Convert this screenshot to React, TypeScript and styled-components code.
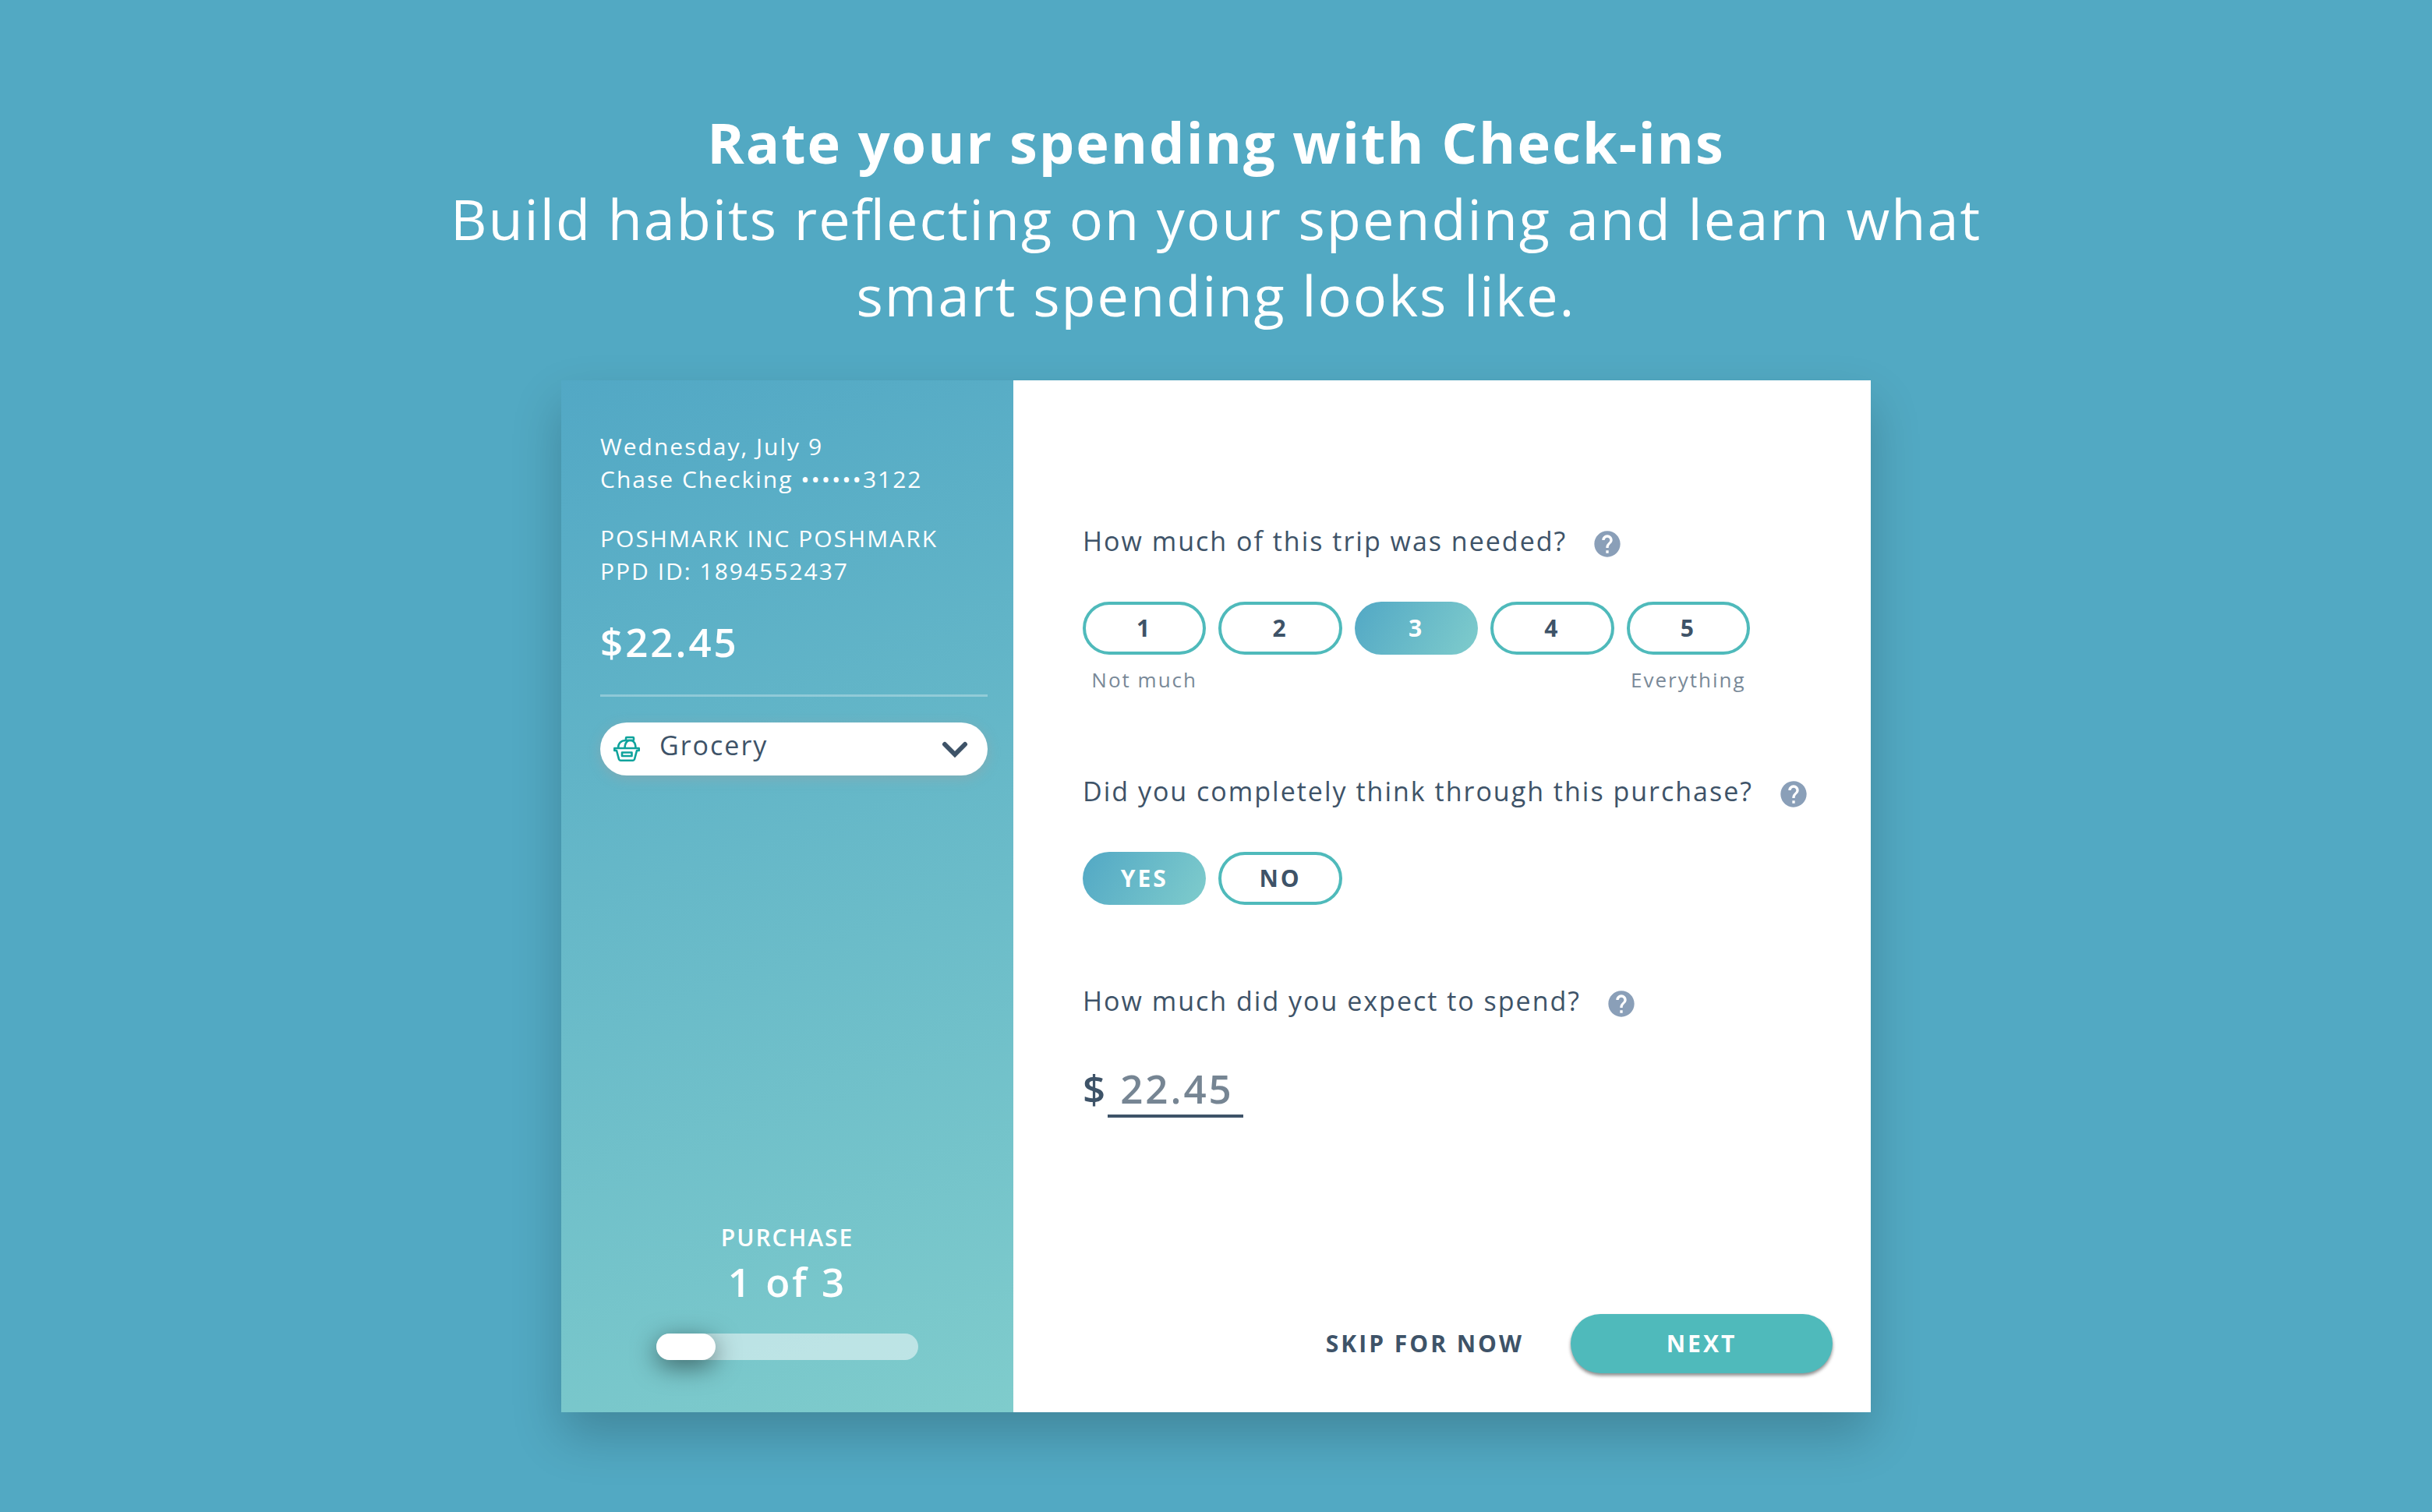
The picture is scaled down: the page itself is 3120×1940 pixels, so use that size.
import React, { useId, useState } from "react";
import styled, { createGlobalStyle, css } from "styled-components";
import { MdHelp } from "react-icons/md";

const ink = "#3e5368";
const teal = "#4fbabb";
const blue = "#52a9c3";
const sky = "#52a8c5";
const mint = "#7fcccc";

const GlobalStyle = createGlobalStyle`
  *, *::before, *::after { box-sizing: border-box; }
  body {
    margin: 0;
    background: ${blue};
    color: ${ink};
    font-family: "Open Sans", "Noto Sans", sans-serif;
    letter-spacing: 2px;
  }
  button, input, select { font: inherit; color: inherit; letter-spacing: inherit; }
`;

const Page = styled.main`
  min-height: 100vh;
  padding: 133px 40px 128px;
  display: flex;
  flex-direction: column;
  align-items: center;
  gap: 61px;
`;

const Intro = styled.header`
  max-width: 2100px;
  color: #fff;
  text-align: center;
  font-size: 72px;
  line-height: 98px;
  font-feature-settings: "liga" 1;
`;

const Title = styled.h1`
  margin: 0;
  font-size: inherit;
  font-weight: 700;
`;

const Lead = styled.p`
  margin: 0;
`;

const Card = styled.section`
  width: 100%;
  max-width: 1680px;
  min-height: 1324px;
  display: grid;
  grid-template-columns: 580px 1fr;
  background: #fff;
  box-shadow: 0 30px 60px rgba(0, 0, 0, 0.2);
`;

const Sidebar = styled.aside`
  display: flex;
  flex-direction: column;
  justify-content: space-between;
  padding: 64px 0 67px;
  color: #fff;
  font-size: 30px;
  line-height: 42px;
  background: linear-gradient(160deg, ${sky}, ${mint});
`;

const Details = styled.div`
  display: flex;
  flex-direction: column;
  padding: 0 33px 0 50px;
`;

const Paragraph = styled.p`
  margin: 0 0 34px;
`;

const largeFigure = css`
  font-size: 51px;
  font-weight: 600;
  letter-spacing: 3px;
`;

const Amount = styled.strong`
  ${largeFigure}
  padding-bottom: 33px;
  border-bottom: 3px solid rgba(255, 255, 255, 0.3);
  line-height: 70px;
`;

const Picker = styled.div`
  position: relative;
  display: flex;
  align-items: center;
  height: 68px;
  margin-top: 33px;
  border-radius: 34px;
  background: #fff;
  color: ${ink};
  box-shadow: 0 4px 16px rgba(160, 160, 160, 0.45);
`;

const PickerIcon = styled.span`
  position: absolute;
  left: 17px;
  display: flex;
  pointer-events: none;
`;

const PickerArrow = styled(PickerIcon)`
  left: auto;
  right: 25px;
`;

const Select = styled.select`
  width: 100%;
  height: 100%;
  padding: 0 80px 10px 76px;
  border: 0;
  border-radius: 34px;
  background: transparent;
  appearance: none;
  font-size: 34px;
`;

const Progress = styled.div`
  align-self: center;
  width: 336px;
  display: flex;
  flex-direction: column;
  text-align: center;
  font-weight: 600;
`;

const Count = styled.span`
  ${largeFigure}
  margin-bottom: 32px;
  line-height: 70px;
`;

const Track = styled.div`
  height: 34px;
  border-radius: 17px;
  background: rgba(255, 255, 255, 0.5);
`;

const Fill = styled.div`
  width: 76px;
  height: 100%;
  border-radius: 17px;
  background: #fff;
  box-shadow: 0 8px 32px rgba(0, 0, 0, 0.5);
`;

const Survey = styled.form`
  display: flex;
  flex-direction: column;
  justify-content: space-between;
  padding: 182px 49px 50px 89px;
`;

const Questions = styled.div`
  display: flex;
  flex-direction: column;
  gap: 99px;
`;

const Group = styled.div`
  display: flex;
  flex-direction: column;
  align-items: flex-start;
`;

const Heading = styled.div`
  display: flex;
  align-items: center;
  gap: 32px;
  margin-bottom: 54px;
  font-size: 34px;
  line-height: 48px;
`;

const HelpButton = styled.button`
  display: flex;
  margin: 8px 0 0;
  padding: 0;
  border: 0;
  background: none;
  color: #8a9fb8;
`;

const Scale = styled.div`
  width: 100%;
  max-width: 856px;
  display: grid;
  grid-template-columns: repeat(5, 1fr);
  gap: 12px 16px;
`;

const buttonText = css`
  padding: 0 0 2px;
  font-size: 30px;
  font-weight: 700;
  letter-spacing: 3px;
`;

const pillFilled = css`
  border-color: transparent;
  background: linear-gradient(120deg, ${sky}, ${mint}) border-box;
  color: #fff;
`;

const Pill = styled.button<{ $selected: boolean }>`
  ${buttonText}
  height: 68px;
  border: 4px solid ${teal};
  border-radius: 34px;
  background: #fff;
  ${(p) => p.$selected && pillFilled}
`;

const Caption = styled.span<{ $column: number }>`
  grid-column: ${(p) => p.$column};
  color: #798998;
  font-size: 26px;
  line-height: 40px;
  text-align: center;
  white-space: nowrap;
`;

const Money = styled.div`
  ${largeFigure}
  display: flex;
  line-height: 68px;
`;

const MoneyInput = styled.input`
  width: 174px;
  height: 72px;
  padding: 0 16px;
  border: 0;
  border-bottom: 4px solid ${ink};
  background: transparent;
  color: #768593;
`;

const Actions = styled.div`
  display: flex;
  justify-content: flex-end;
  gap: 60px;
`;

const SkipButton = styled.button`
  ${buttonText}
  border: 0;
  background: none;
`;

const NextButton = styled.button`
  ${buttonText}
  width: 336px;
  height: 76px;
  border: 0;
  border-radius: 38px;
  background: ${teal};
  color: #fff;
  box-shadow: 0 3px 4px rgba(0, 0, 0, 0.45);
`;

const BasketIcon = () => (
  <svg width="34" height="34" viewBox="0 0 34 34" fill="none" stroke="#0fa39c" strokeWidth="2.6" strokeLinejoin="round">
    <path d="M1.300 16h31.400v3h-2.700l-3 11.200q-.5 1.500-2 1.500H9q-1.500 0-2-1.500L4 19H1.300z" />
    <path d="M11 21.500h12.500V26H11z" />
    <path d="M6 16c0-6 3.500-10 10-10" />
    <path d="M14.500 16c0-5 2-8.500 5-10h4c3.500 1.500 5 5 5 10" />
    <rect x="16" y="2" width="10" height="4" rx="1" />
  </svg>
);

const Chevron = () => (
  <svg width="34" height="22" viewBox="0 0 34 22" fill="none" stroke={ink} strokeWidth="6" strokeLinecap="round">
    <path d="M4 5l13 13 13-13" />
  </svg>
);

function Question({ id, text, htmlFor }: { id?: string; text: string; htmlFor?: string }) {
  return (
    <Heading>
      {htmlFor ? <label htmlFor={htmlFor}>{text}</label> : <span id={id}>{text}</span>}
      <HelpButton type="button" aria-label={`Help: ${text}`}>
        <MdHelp size={40} />
      </HelpButton>
    </Heading>
  );
}

export default function App() {
  const id = useId();
  const [needed, setNeeded] = useState(3);
  const [thought, setThought] = useState("YES");

  return (
    <>
      <GlobalStyle />
      <Page>
        <Intro>
          <Title>Rate your spending with Check-ins</Title>
          <Lead>Build habits reflecting on your spending and learn what smart spending looks like.</Lead>
        </Intro>
        <Card>
          <Sidebar>
            <Details>
              <Paragraph>
                Wednesday, July 9<br />
                Chase Checking ••••••3122
              </Paragraph>
              <Paragraph>
                POSHMARK INC POSHMARK<br />
                PPD ID: 1894552437
              </Paragraph>
              <Amount>$22.45</Amount>
              <Picker>
                <PickerIcon><BasketIcon /></PickerIcon>
                <Select aria-label="Category" defaultValue="Grocery">
                  <option>Grocery</option>
                </Select>
                <PickerArrow><Chevron /></PickerArrow>
              </Picker>
            </Details>
            <Progress>
              <span>PURCHASE</span>
              <Count>1 of 3</Count>
              <Track role="progressbar" aria-label="Purchase" aria-valuenow={1} aria-valuemax={3}>
                <Fill />
              </Track>
            </Progress>
          </Sidebar>
          <Survey onSubmit={(e) => e.preventDefault()}>
            <Questions>
              <Group role="group" aria-labelledby={`${id}-needed`}>
                <Question id={`${id}-needed`} text="How much of this trip was needed?" />
                <Scale>
                  {[1, 2, 3, 4, 5].map((n) => (
                    <Pill key={n} type="button" aria-pressed={needed === n} $selected={needed === n} onClick={() => setNeeded(n)}>
                      {n}
                    </Pill>
                  ))}
                  <Caption $column={1}>Not much</Caption>
                  <Caption $column={5}>Everything</Caption>
                </Scale>
              </Group>
              <Group role="group" aria-labelledby={`${id}-thought`}>
                <Question id={`${id}-thought`} text="Did you completely think through this purchase?" />
                <Scale>
                  {["YES", "NO"].map((v) => (
                    <Pill key={v} type="button" aria-pressed={thought === v} $selected={thought === v} onClick={() => setThought(v)}>
                      {v}
                    </Pill>
                  ))}
                </Scale>
              </Group>
              <Group>
                <Question htmlFor={`${id}-expected`} text="How much did you expect to spend?" />
                <Money>
                  <span>$</span>
                  <MoneyInput id={`${id}-expected`} defaultValue="22.45" />
                </Money>
              </Group>
            </Questions>
            <Actions>
              <SkipButton type="button">SKIP FOR NOW</SkipButton>
              <NextButton type="submit">NEXT</NextButton>
            </Actions>
          </Survey>
        </Card>
      </Page>
    </>
  );
}
